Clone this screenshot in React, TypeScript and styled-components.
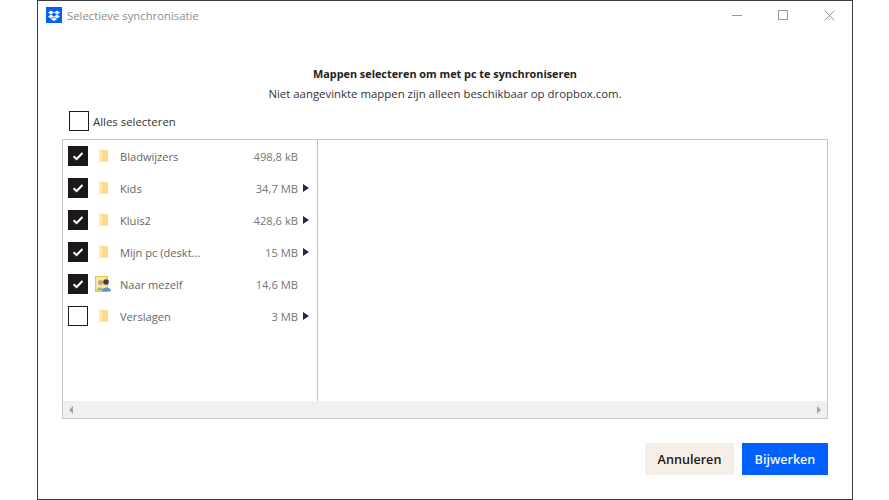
import React from 'react';
import styled, { createGlobalStyle } from 'styled-components';

const Global = createGlobalStyle`
  html, body { margin: 0; padding: 0; background: #fff; }
  body { font-family: "Open Sans", "Liberation Sans", sans-serif; }
`;

const Page = styled.div`
  width: 889px;
  height: 500px;
  padding-left: 37px;
  box-sizing: border-box;
  background: #fff;
`;

const Win = styled.div`
  width: 816px;
  height: 500px;
  box-sizing: border-box;
  border: 1px solid #3c3c3c;
  display: flex;
  flex-direction: column;
  background: #fff;
`;

const TitleBar = styled.div`
  height: 28px;
  display: flex;
  align-items: center;
  padding-left: 8px;
  flex: none;
`;

const Logo = styled.div`
  width: 16px;
  height: 16px;
  background: #0061fe;
  display: flex;
  align-items: center;
  justify-content: center;
  margin-right: 5px;
`;

const Title = styled.span`
  font-size: 11.3px;
  color: #8c8c8c;
  flex: 1;
`;

const WinButton = styled.div`
  width: 46px;
  height: 28px;
  display: flex;
  align-items: center;
  justify-content: center;
`;

const Heading = styled.div`
  margin-top: 37px;
  height: 16px;
  line-height: 16px;
  text-align: center;
  font-size: 10.85px;
  font-weight: 700;
  color: #222;
`;

const Sub = styled.div`
  margin-top: 4px;
  height: 16px;
  line-height: 16px;
  text-align: center;
  font-size: 11.4px;
  color: #333;
`;

const AllRow = styled.div`
  margin-top: 9px;
  padding-left: 31px;
  height: 20px;
  display: flex;
  align-items: center;
  gap: 4px;
  font-size: 11.4px;
  color: #333;
`;

const Panel = styled.div`
  margin: 8px 0 0 24px;
  width: 766px;
  height: 280px;
  box-sizing: border-box;
  border: 1px solid #c9c6bf;
  display: flex;
  flex-direction: column;
`;

const Columns = styled.div`
  flex: 1;
  display: flex;
  min-height: 0;
`;

const LeftCol = styled.div`
  width: 254px;
  border-right: 1px solid #c9c6bf;
`;

const Row = styled.div`
  height: 32px;
  display: flex;
  align-items: center;
  padding-left: 5px;
`;

const Box = styled.div<{ $checked?: boolean }>`
  width: 20px;
  height: 20px;
  box-sizing: border-box;
  flex: none;
  border: 1px solid #1e1919;
  background: ${p => (p.$checked ? '#1e1919' : '#fff')};
  display: flex;
  align-items: center;
  justify-content: center;
`;

const IconSlot = styled.div`
  width: 20px;
  height: 20px;
  margin-left: 5px;
  flex: none;
  display: flex;
  align-items: center;
  justify-content: center;
`;

const Name = styled.span`
  margin-left: 7px;
  width: 110px;
  font-size: 11.1px;
  color: #666;
  white-space: nowrap;
`;

const Size = styled.span`
  width: 68px;
  text-align: right;
  font-size: 11.2px;
  color: #777;
  white-space: nowrap;
`;

const Arrow = styled.div`
  margin-left: 5px;
  width: 0;
  height: 0;
  border-left: 6px solid #1e2a44;
  border-top: 4px solid transparent;
  border-bottom: 4px solid transparent;
`;

const ScrollBar = styled.div`
  height: 17px;
  flex: none;
  background: #f0f0f0;
  display: flex;
  align-items: center;
  justify-content: space-between;
  padding: 0 6px;
`;

const ScrollArrow = styled.div<{ $right?: boolean }>`
  width: 0;
  height: 0;
  border-top: 4px solid transparent;
  border-bottom: 4px solid transparent;
  ${p => (p.$right ? 'border-left: 4px solid #a3a3a3;' : 'border-right: 4px solid #a3a3a3;')}
`;

const Footer = styled.div`
  margin: 24px 24px 0 0;
  display: flex;
  justify-content: flex-end;
  gap: 8px;
`;

const Button = styled.button<{ $primary?: boolean }>`
  height: 32px;
  width: ${p => (p.$primary ? '86px' : '89px')};
  border: none;
  padding: 0;
  font-family: inherit;
  font-size: 12.6px;
  font-weight: 600;
  background: ${p => (p.$primary ? '#0061fe' : '#f5efe7')};
  color: ${p => (p.$primary ? '#f7f5f2' : '#1e1919')};
`;

const Check = () => (
  <svg width="14" height="14" viewBox="0 0 14 14">
    <path d="M2.5 7.2 L5.6 10 L11.5 4" fill="none" stroke="#fff" strokeWidth="2" />
  </svg>
);

const Folder = () => (
  <svg width="12" height="16" viewBox="0 0 12 16">
    <path d="M2 1 H5 L5.5 2 H11 V13.5 H5 L2 15 Z" fill="#fbe09a" />
    <path d="M5.5 2 H11 V13.5 H5.5 Z" fill="#fcdc85" />
    <path d="M2 1 H5 V13 L2 15 Z" fill="#fdecc0" />
  </svg>
);

const Persons = () => (
  <svg width="16" height="16" viewBox="0 0 16 16">
    <rect x="0.5" y="0.5" width="12" height="15" fill="#f5e6b0" stroke="#eec63e" />
    <circle cx="5.5" cy="6.5" r="2.6" fill="#c9a876" />
    <path d="M1.5 14.5 C2 10.5 8.5 10.5 9 14.5 Z" fill="#a8b86a" />
    <circle cx="11" cy="6" r="2.8" fill="#4a3a30" />
    <path d="M7 15.5 C7 10 16 10 16 15.5 Z" fill="#5f93c8" />
  </svg>
);

const rows = [
  { name: 'Bladwijzers', size: '498,8 kB', checked: true, arrow: false },
  { name: 'Kids', size: '34,7 MB', checked: true, arrow: true },
  { name: 'Kluis2', size: '428,6 kB', checked: true, arrow: true },
  { name: 'Mijn pc (deskt...', size: '15 MB', checked: true, arrow: true },
  { name: 'Naar mezelf', size: '14,6 MB', checked: true, arrow: false, persons: true },
  { name: 'Verslagen', size: '3 MB', checked: false, arrow: true },
];

export default function App() {
  return (
    <Page>
      <Global />
      <Win>
        <TitleBar>
          <Logo>
            <svg width="12" height="11" viewBox="0 0 24 22">
              <path fill="#fff" d="M6 1 L12 5 L6 9 L0 5 Z M18 1 L24 5 L18 9 L12 5 Z M0 13 L6 9 L12 13 L6 17 Z M18 9 L24 13 L18 17 L12 13 Z M6 18.5 L12 14.5 L18 18.5 L12 22 Z" />
            </svg>
          </Logo>
          <Title>Selectieve synchronisatie</Title>
          <WinButton>
            <svg width="10" height="10" viewBox="0 0 10 10"><path d="M0 5.5 H10" stroke="#999" /></svg>
          </WinButton>
          <WinButton>
            <svg width="10" height="10" viewBox="0 0 10 10"><rect x="0.5" y="0.5" width="9" height="9" fill="none" stroke="#999" /></svg>
          </WinButton>
          <WinButton>
            <svg width="11" height="11" viewBox="0 0 11 11"><path d="M0.5 0.5 L10.5 10.5 M10.5 0.5 L0.5 10.5" stroke="#999" /></svg>
          </WinButton>
        </TitleBar>
        <Heading>Mappen selecteren om met pc te synchroniseren</Heading>
        <Sub>Niet aangevinkte mappen zijn alleen beschikbaar op dropbox.com.</Sub>
        <AllRow>
          <Box />
          Alles selecteren
        </AllRow>
        <Panel>
          <Columns>
            <LeftCol>
              {rows.map(r => (
                <Row key={r.name}>
                  <Box $checked={r.checked}>{r.checked && <Check />}</Box>
                  <IconSlot>{r.persons ? <Persons /> : <Folder />}</IconSlot>
                  <Name>{r.name}</Name>
                  <Size>{r.size}</Size>
                  {r.arrow && <Arrow />}
                </Row>
              ))}
            </LeftCol>
          </Columns>
          <ScrollBar>
            <ScrollArrow />
            <ScrollArrow $right />
          </ScrollBar>
        </Panel>
        <Footer>
          <Button>Annuleren</Button>
          <Button $primary>Bijwerken</Button>
        </Footer>
      </Win>
    </Page>
  );
}
